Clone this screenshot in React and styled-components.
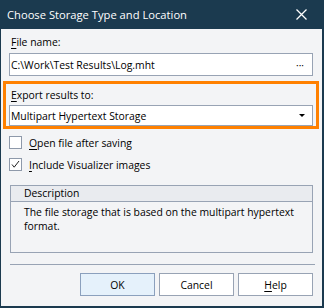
import React from "react";
import styled, { createGlobalStyle } from "styled-components";

const Global = createGlobalStyle`
  html, body {
    margin: 0;
    padding: 0;
    background: #f3f4f6;
  }
  body {
    font-family: "Open Sans", "Noto Sans", sans-serif;
    font-size: 10.4px;
    color: #000;
  }
`;

const Window = styled.div`
  width: 324px;
  height: 308px;
  box-sizing: border-box;
  background: #f3f4f6;
  border-left: 1px solid #1b3a4f;
  border-right: 2px solid #1b3a4f;
  border-bottom: 2px solid #1b3a4f;
  display: flex;
  flex-direction: column;
`;

const TitleBar = styled.div`
  height: 29px;
  background: #1b3a4f;
  margin-left: -1px;
  margin-right: -2px;
  padding: 0 17px 0 7px;
  display: flex;
  align-items: center;
  justify-content: space-between;
  color: #fff;
  font-size: 11.2px;
`;

const Body = styled.div`
  flex: 1;
  padding: 5px 9px 0 8px;
  display: flex;
  flex-direction: column;
`;

const Label = styled.div`
  line-height: 16px;
  padding-left: 2px;
  margin-bottom: ${({ $gap }) => $gap || 3}px;
`;

const Key = styled.span`
  text-decoration: underline;
  text-underline-offset: 2px;
`;

const Field = styled.div`
  height: ${({ $h }) => $h || 23}px;
  box-sizing: border-box;
  background: #fff;
  border: 1px solid #98a3b4;
  display: flex;
  align-items: center;
  justify-content: space-between;
  padding: 0 ${({ $pr }) => $pr || 8}px 0 1px;
`;

const Highlight = styled.div`
  margin: 5px -6px 0 -6px;
  border: 3px solid #ff8000;
  padding: 3px 3px 0 3px;
`;

const CheckRow = styled.label`
  display: flex;
  align-items: center;
  gap: 7px;
  height: 13px;
  margin-top: ${({ $top }) => $top}px;
`;

const Box = styled.span`
  width: 13px;
  height: 13px;
  box-sizing: border-box;
  border: 1px solid #8e99aa;
  background: #fff;
  display: flex;
  align-items: center;
  justify-content: center;
`;

const Group = styled.div`
  margin-top: 14px;
  width: 303px;
  height: 68px;
  box-sizing: border-box;
  border: 1px solid #98a3b4;
  margin-left: 1px;
`;

const GroupHead = styled.div`
  height: 15px;
  background: #e9ebef;
  border-bottom: 1px solid #98a3b4;
  padding-left: 13px;
  line-height: 15px;
`;

const GroupText = styled.div`
  padding: 3px 8px 0 13px;
  line-height: 14px;
`;

const Separator = styled.div`
  margin: 11px -2px 0 1px;
  height: 1px;
  background: #98a3b4;
`;

const Buttons = styled.div`
  margin-top: 8px;
  display: flex;
  justify-content: flex-end;
  gap: 4px;
`;

const Button = styled.button`
  width: 75px;
  height: 23px;
  box-sizing: border-box;
  border: 1px solid ${({ $primary }) => ($primary ? "#8ba0bd" : "#98a3b4")};
  background: ${({ $primary }) => ($primary ? "#e5f1fb" : "#fff")};
  font: inherit;
  color: #000;
  padding: 0;
`;

const Dots = styled.span`
  font-size: 10px;
  letter-spacing: 0;
`;

export default function App() {
  return (
    <>
      <Global />
      <Window>
        <TitleBar>
          <span>Choose Storage Type and Location</span>
          <svg width="11" height="11" viewBox="0 0 11 11">
            <path d="M0.5 0.5 L10.5 10.5 M10.5 0.5 L0.5 10.5" stroke="#fff" strokeWidth="1.3" />
          </svg>
        </TitleBar>
        <Body>
          <Label>
            <Key>F</Key>ile name:
          </Label>
          <Field>
            <span>C:\Work\Test Results\Log.mht</span>
            <Dots>···</Dots>
          </Field>
          <Highlight>
            <Label $gap={2}>
              <Key>E</Key>xport results to:
            </Label>
            <Field $h={21} $pr={7}>
              <span>Multipart Hypertext Storage</span>
              <svg width="6" height="3" viewBox="0 0 6 3">
                <path d="M0 0 H6 L3 3 Z" fill="#000" />
              </svg>
            </Field>
          </Highlight>
          <CheckRow $top={7}>
            <Box />
            <span>
              <Key>O</Key>pen file after saving
            </span>
          </CheckRow>
          <CheckRow $top={9}>
            <Box>
              <svg width="11" height="11" viewBox="0 0 11 11">
                <path d="M2 5.5 L4.2 8.2 L9 2" stroke="#222" strokeWidth="1" fill="none" />
              </svg>
            </Box>
            <span>
              <Key>I</Key>nclude Visualizer images
            </span>
          </CheckRow>
          <Group>
            <GroupHead>Description</GroupHead>
            <GroupText>The file storage that is based on the multipart hypertext format.</GroupText>
          </Group>
          <Separator />
          <Buttons>
            <Button $primary>OK</Button>
            <Button>Cancel</Button>
            <Button>
              <Key>H</Key>elp
            </Button>
          </Buttons>
        </Body>
      </Window>
    </>
  );
}
